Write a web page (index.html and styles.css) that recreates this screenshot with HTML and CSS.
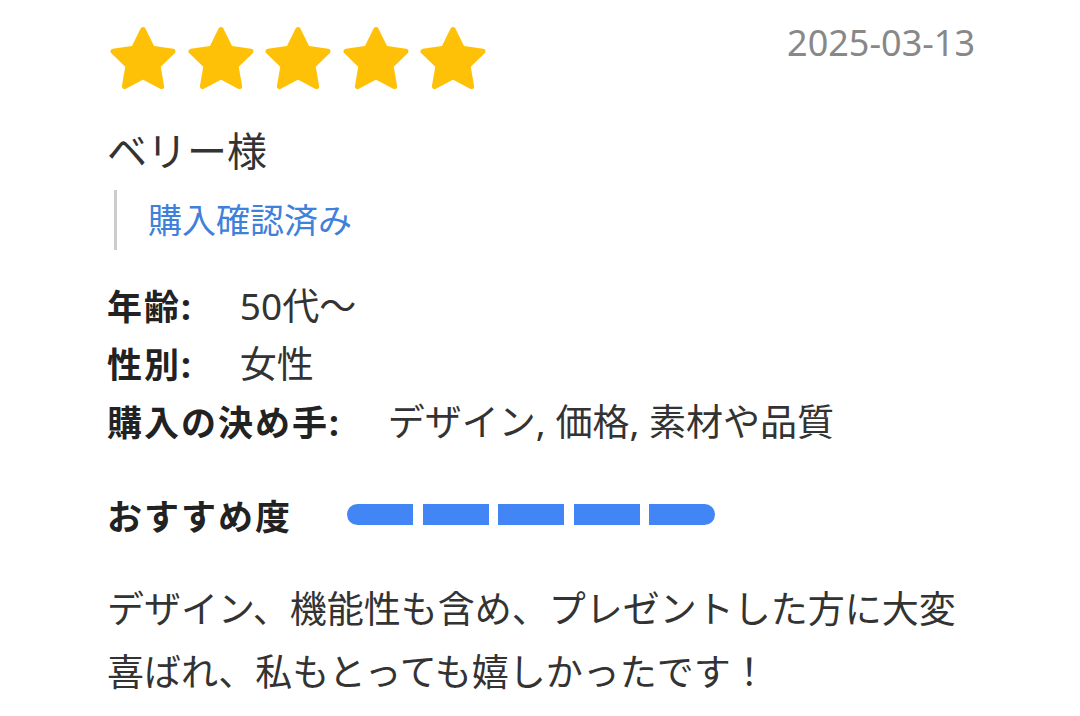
FILE: index.html
```html
<!DOCTYPE html>
<html lang="ja">
<head>
    <meta charset="UTF-8">
    <meta name="viewport" content="width=device-width, initial-scale=1.0">
    <title>レビュー</title>
    <link rel="stylesheet" href="styles.css">
</head>
<body>

    <!-- Review card -->
    <div class="review">
        <div class="review-header">
            <div class="stars">
                <svg class="star" viewBox="0 0 100 100"><polygon points="50,7 63.52,34.39 93.75,38.79 71.87,60.11 77.04,90.21 50,76 22.96,90.21 28.13,60.11 6.25,38.79 36.48,34.39"/></svg>
                <svg class="star" viewBox="0 0 100 100"><polygon points="50,7 63.52,34.39 93.75,38.79 71.87,60.11 77.04,90.21 50,76 22.96,90.21 28.13,60.11 6.25,38.79 36.48,34.39"/></svg>
                <svg class="star" viewBox="0 0 100 100"><polygon points="50,7 63.52,34.39 93.75,38.79 71.87,60.11 77.04,90.21 50,76 22.96,90.21 28.13,60.11 6.25,38.79 36.48,34.39"/></svg>
                <svg class="star" viewBox="0 0 100 100"><polygon points="50,7 63.52,34.39 93.75,38.79 71.87,60.11 77.04,90.21 50,76 22.96,90.21 28.13,60.11 6.25,38.79 36.48,34.39"/></svg>
                <svg class="star" viewBox="0 0 100 100"><polygon points="50,7 63.52,34.39 93.75,38.79 71.87,60.11 77.04,90.21 50,76 22.96,90.21 28.13,60.11 6.25,38.79 36.48,34.39"/></svg>
            </div>
            <div class="review-date">2025-03-13</div>
        </div>

        <div class="reviewer-name">ベリー様</div>
        <div class="verified">購入確認済み</div>

        <!-- Profile -->
        <div class="profile">
            <div class="profile-row"><span class="profile-label">年齢:</span><span class="profile-value">50代〜</span></div>
            <div class="profile-row"><span class="profile-label">性別:</span><span class="profile-value">女性</span></div>
            <div class="profile-row"><span class="profile-label">購入の決め手:</span><span class="profile-value">デザイン, 価格, 素材や品質</span></div>
        </div>

        <!-- Recommendation meter -->
        <div class="recommend">
            <span class="recommend-label">おすすめ度</span>
            <div class="meter">
                <span class="meter-seg"></span>
                <span class="meter-seg"></span>
                <span class="meter-seg"></span>
                <span class="meter-seg"></span>
                <span class="meter-seg"></span>
            </div>
        </div>

        <p class="comment">デザイン、機能性も含め、プレゼントした方に大変喜ばれ、私もとっても嬉しかったです！</p>
    </div>

</body>
</html>
```

FILE: styles.css
```css
/* Base styling */
body, html {
    margin: 0;
    padding: 0;
    background: #fff;
    color: #333;
    font-family: "Noto Sans", "Noto Sans CJK JP", sans-serif;
}

.review {
    padding: 25px 105px 0 107px;
}

/* Header: stars + date */
.review-header {
    display: flex;
    justify-content: space-between;
    align-items: flex-start;
}

.stars {
    display: flex;
    gap: 9.5px;
    margin-left: 2px;
}

.star {
    width: 68px;
    height: 68px;
    display: block;
}

.star polygon {
    fill: #ffc107;
    stroke: #ffc107;
    stroke-width: 8;
    stroke-linejoin: round;
}

.review-date {
    font-size: 36px;
    line-height: 36px;
    color: #888;
}

/* Reviewer */
.reviewer-name {
    margin-top: 33px;
    font-size: 40px;
    line-height: 50px;
    color: #333;
}

.verified {
    margin: 14px 0 0 7px;
    padding-left: 31px;
    border-left: 3px solid #ccc;
    font-size: 34px;
    line-height: 60px;
    color: #3f80db;
}

/* Profile rows */
.profile {
    margin-top: 27px;
}

.profile-row {
    display: flex;
    align-items: baseline;
    height: 58px;
    line-height: 58px;
}

.profile-label {
    font-size: 35px;
    font-weight: bold;
    letter-spacing: 2px;
    color: #222;
}

.profile-value {
    margin-left: 47px;
    font-size: 37px;
}

/* Recommendation */
.recommend {
    display: flex;
    align-items: center;
    margin-top: 43px;
    height: 40px;
}

.recommend-label {
    font-size: 35px;
    font-weight: bold;
    letter-spacing: 2px;
    color: #222;
    width: 240px;
}

.meter {
    display: flex;
    gap: 9.5px;
}

.meter-seg {
    width: 66px;
    height: 21px;
    background: #4285f4;
}

.meter-seg:first-child {
    border-radius: 11px 0 0 11px;
}

.meter-seg:last-child {
    border-radius: 0 11px 11px 0;
}

/* Comment */
.comment {
    margin: 43px 0 0;
    font-size: 37px;
    line-height: 63px;
}
```
